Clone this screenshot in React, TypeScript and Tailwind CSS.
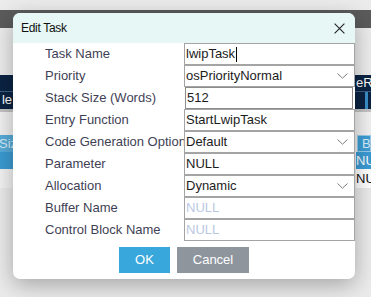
import React from 'react';

type Row = {
  label: string;
  value: string;
  kind?: 'text' | 'select' | 'placeholder';
  caret?: boolean;
  focused?: boolean;
};

const rows: Row[] = [
  { label: 'Task Name', value: 'lwipTask', caret: true },
  { label: 'Priority', value: 'osPriorityNormal', kind: 'select' },
  { label: 'Stack Size (Words)', value: '512', focused: true },
  { label: 'Entry Function', value: 'StartLwipTask' },
  { label: 'Code Generation Option', value: 'Default', kind: 'select' },
  { label: 'Parameter', value: 'NULL' },
  { label: 'Allocation', value: 'Dynamic', kind: 'select' },
  { label: 'Buffer Name', value: 'NULL', kind: 'placeholder' },
  { label: 'Control Block Name', value: 'NULL', kind: 'placeholder' },
];

function Chevron() {
  return (
    <svg width="11" height="6" viewBox="0 0 11 6" fill="none">
      <path d="M0.5 0.5L5.5 5.2L10.5 0.5" stroke="#7d7d7d" strokeWidth="1" />
    </svg>
  );
}

function Background() {
  return (
    <div className="flex flex-col text-[13px]">
      <div className="h-[10px] bg-[#ebebeb]" />
      <div className="h-[18px] bg-[#5b5b5b]" />
      <div className="h-[47px] bg-[#ececec]" />
      {/* table header */}
      <div className="h-[16px] bg-[#0b2343] flex justify-end">
        <div className="w-[15px] overflow-hidden whitespace-nowrap text-white leading-[16px]">eRTOS</div>
      </div>
      <div className="h-[18px] bg-[#0b2343] flex justify-between border-t border-[#3d5f86]">
        <div className="w-[13px] overflow-hidden whitespace-nowrap text-white leading-[16px] text-right pr-[1px]">le</div>
        <div className="w-[15px] flex">
          <div className="w-[9px]" />
          <div className="w-[3px] bg-[#3a8fc8]" />
        </div>
      </div>
      <div className="h-[3px] bg-[#c3c3c3]" />
      <div className="h-[23px] bg-[#f1f1f1]" />
      <div className="h-[17px] bg-[#f1f1f1] flex justify-between">
        <div className="w-[13px] bg-[#58acd9] overflow-hidden whitespace-nowrap text-[#d3ebf8] leading-[17px] -indent-[1px]">Size</div>
        <div className="w-[14px] bg-[#3d9dd4] border border-[#9ccbe8] overflow-hidden whitespace-nowrap text-[#d8eefa] leading-[15px] pl-[4px]">Buf</div>
      </div>
      <div className="h-[17px] bg-[#f1f1f1] flex justify-between">
        <div className="w-[13px] bg-[#3b9bd3]" />
        <div className="w-[15px] bg-[#3b9bd3] overflow-hidden whitespace-nowrap text-white leading-[17px]">NULL</div>
      </div>
      <div className="h-[19px] bg-[#f3f3f3] flex justify-end">
        <div className="w-[15px] bg-white overflow-hidden whitespace-nowrap text-[#111] leading-[19px]">NULL</div>
      </div>
      <div className="flex-1 bg-[#ebebeb]" />
    </div>
  );
}

function Field({ row }: { row: Row }) {
  const border = row.focused
    ? 'ml-px mr-[2px] border-[#8c8c8c]'
    : 'border-[#a4a4a4]';
  return (
    <div className={`h-[22px] border ${border} bg-white flex items-center justify-between pl-px pr-[6px] overflow-hidden`}>
      <span
        className={`text-[13px] leading-[20px] whitespace-nowrap flex items-center ${
          row.kind === 'placeholder' ? 'text-[#b9c8e2]' : 'text-[#1c1c1c]'
        }`}
      >
        {row.value}
        {row.caret && <span className="inline-block w-px h-[15px] bg-black ml-px" />}
      </span>
      {row.kind === 'select' && <Chevron />}
    </div>
  );
}

export default function App() {
  return (
    <div className="relative w-[371px] h-[297px] overflow-hidden bg-[#ebebeb] font-['Liberation_Sans',Arial,sans-serif]">
      <Background />

      {/* Edit Task modal */}
      <div className="absolute left-[13px] top-[13px] w-[342px] rounded-[7px] bg-white overflow-hidden shadow-[0_6px_22px_rgba(0,0,0,0.3)]">
        <div className="h-[30px] bg-[#e6f7f5] flex items-center justify-between pl-[8px] pr-[10px]">
          <span className="text-[12px] text-[#111] tracking-[-0.3px]">Edit Task</span>
          <svg width="11" height="11" viewBox="0 0 11 11" fill="none">
            <path d="M0.6 0.6L10.4 10.4M10.4 0.6L0.6 10.4" stroke="#222" strokeWidth="1.1" />
          </svg>
        </div>

        <div className="grid grid-cols-2">
          {rows.map((row) => (
            <React.Fragment key={row.label}>
              <div className="h-[22px] pl-[32px] text-[13px] leading-[22px] text-[#3f3f55] whitespace-nowrap overflow-hidden">
                {row.label}
              </div>
              <Field row={row} />
            </React.Fragment>
          ))}
        </div>

        <div className="flex justify-center gap-[7px] pt-[6px] pb-[6px]">
          <button className="w-[51px] h-[26px] bg-[#38a8dc] text-white text-[13px]">OK</button>
          <button className="w-[72px] h-[26px] bg-[#8e959d] text-white text-[13px]">Cancel</button>
        </div>
      </div>
    </div>
  );
}
